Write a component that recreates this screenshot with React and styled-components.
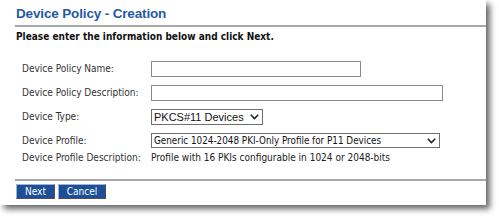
import React from "react";
import styled, { createGlobalStyle } from "styled-components";

const Global = createGlobalStyle`
  html, body { margin: 0; padding: 0; background: #ffffff; }
  body { width: 499px; height: 220px; overflow: hidden; }
`;

const sans = `"DejaVu Sans Condensed", "DejaVu Sans", Verdana, sans-serif`;

const Panel = styled.div`
  width: 486px;
  height: 205px;
  background: #ffffff;
  box-shadow: 4px 4px 6px rgba(0, 0, 0, 0.6);
  box-sizing: border-box;
  padding: 5px 0 0 15px;
  display: flex;
  flex-direction: column;
`;

const Title = styled.h1`
  margin: 0 0 0 1px;
  font-family: "Liberation Sans", Arial, sans-serif;
  font-size: 13.5px;
  letter-spacing: -0.15px;
  font-weight: bold;
  color: #1f5aa6;
  line-height: 18px;
`;

const Rule = styled.div`
  height: 2px;
  background: #a8a8a8;
  margin-top: ${(p) => p.$top || 0}px;
`;

const Intro = styled.p`
  margin: 4px 0 0 1px;
  font-family: ${sans};
  font-size: 10px;
  line-height: 12px;
  font-weight: bold;
  color: #111;
`;

const Form = styled.div`
  display: grid;
  grid-template-columns: 129px auto;
  justify-content: start;
  align-items: center;
  row-gap: 8px;
  margin: 18px 0 0 7px;
  font-family: ${sans};
  font-size: 10px;
  line-height: 12px;
  color: #333;
`;

const Label = styled.div`
  white-space: nowrap;
  margin-top: ${(p) => (p.$tight ? -4 : 0)}px;
`;

const TextInput = styled.input`
  box-sizing: border-box;
  width: ${(p) => p.$w}px;
  height: 16px;
  border: 1px solid #8a8a8a;
  padding: 0 2px;
  margin: 0;
  font-family: ${sans};
  font-size: 10px;
`;

const SelectBox = styled.div`
  box-sizing: border-box;
  width: ${(p) => p.$w}px;
  height: ${(p) => p.$h}px;
  border: 1px solid #707070;
  display: flex;
  align-items: center;
  justify-content: space-between;
  gap: 4px;
  padding: 0 3px 0 2px;
  font-family: ${(p) => (p.$arial ? `"Liberation Sans", Arial, sans-serif` : sans)};
  font-size: ${(p) => (p.$arial ? 11 : 9.8)}px;
  color: #111;
  background: #fff;
  white-space: nowrap;
`;

const Chevron = () => (
  <svg width="9" height="6" viewBox="0 0 9 6">
    <path d="M0.8 0.8 L4.5 4.6 L8.2 0.8" fill="none" stroke="#222" strokeWidth="1.5" />
  </svg>
);

const ValueText = styled.div`
  color: #222;
  white-space: nowrap;
  margin-top: ${(p) => (p.$tight ? -4 : 0)}px;
`;

const Buttons = styled.div`
  display: flex;
  gap: 3px;
  margin: 3px 0 0 1px;
`;

const Button = styled.button`
  box-sizing: border-box;
  width: ${(p) => p.$w}px;
  height: 15px;
  margin: 0;
  padding: 0;
  background: #1c4f98;
  border: 1px solid #9fb3d0;
  border-right-color: #505050;
  border-bottom-color: #505050;
  color: #ffffff;
  font-family: ${sans};
  font-size: 10px;
  line-height: 13px;
`;

export default function App() {
  return (
    <>
      <Global />
      <Panel>
        <Title>Device Policy - Creation</Title>
        <Rule $top={2} />
        <Intro>Please enter the information below and click Next.</Intro>
        <Form>
          <Label>Device Policy Name:</Label>
          <TextInput $w={210} />
          <Label>Device Policy Description:</Label>
          <TextInput $w={292} />
          <Label>Device Type:</Label>
          <SelectBox $w={112} $h={16} $arial>
            <span>PKCS#11 Devices</span>
            <Chevron />
          </SelectBox>
          <Label>Device Profile:</Label>
          <SelectBox $w={289} $h={15}>
            <span>Generic 1024-2048 PKI-Only Profile for P11 Devices</span>
            <Chevron />
          </SelectBox>
          <Label $tight>Device Profile Description:</Label>
          <ValueText $tight>Profile with 16 PKIs configurable in 1024 or 2048-bits</ValueText>
        </Form>
        <Rule $top={15} />
        <Buttons>
          <Button $w={39}>Next</Button>
          <Button $w={48}>Cancel</Button>
        </Buttons>
      </Panel>
    </>
  );
}
